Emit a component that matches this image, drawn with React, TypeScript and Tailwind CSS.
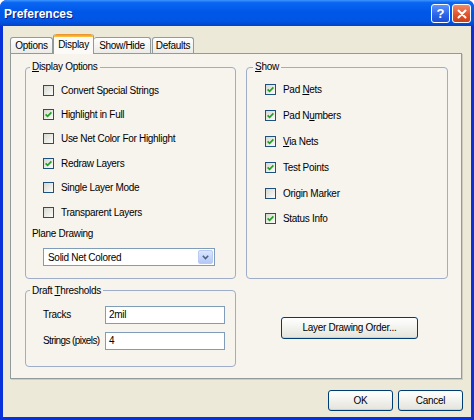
import type { ReactNode } from "react";

const DISPLAY_OPTIONS: { label: ReactNode; checked: boolean }[] = [
  { label: "Convert Special Strings", checked: false },
  { label: "Highlight in Full", checked: true },
  { label: "Use Net Color For Highlight", checked: false },
  { label: "Redraw Layers", checked: true },
  { label: "Single Layer Mode", checked: false },
  { label: "Transparent Layers", checked: false },
];

const SHOW_OPTIONS: { label: ReactNode; checked: boolean }[] = [
  { label: <>Pad <u>N</u>ets</>, checked: true },
  { label: <>Pad N<u>u</u>mbers</>, checked: true },
  { label: <><u>V</u>ia Nets</>, checked: true },
  { label: "Test Points", checked: true },
  { label: "Origin Marker", checked: false },
  { label: "Status Info", checked: true },
];

function CheckBox({ checked }: { checked: boolean }) {
  return (
    <span className="flex h-[11px] w-[11px] shrink-0 items-center justify-center border border-[#1c5180] bg-[linear-gradient(135deg,#d9d9d2,#fbfbf8)]">
      {checked && (
        <svg width="7" height="7" viewBox="0 0 7 7">
          <path d="M0.6 3.3 L2.6 5.3 L6.4 1.4" stroke="#21a121" strokeWidth="1.7" fill="none" />
        </svg>
      )}
    </span>
  );
}

function XpButton({ children, className }: { children: ReactNode; className: string }) {
  return (
    <button
      className={
        "flex items-center justify-center rounded-[3px] border border-[#003c74] bg-[linear-gradient(180deg,#ffffff_0%,#f3f3ef_45%,#e4e3db_100%)] text-black shadow-[inset_0_-1px_0_#d6d0c5] " +
        className
      }
    >
      {children}
    </button>
  );
}

export default function App() {
  return (
    <div className="h-[420px] w-[474px] bg-white">
      <div
        className="flex h-[420px] w-[474px] flex-col overflow-hidden rounded-t-[7px] bg-[#0831d9] text-[10px] tracking-[-0.3px] text-black"
        style={{ fontFamily: '"Liberation Sans", Arial, sans-serif' }}
      >
        {/* Title bar */}
        <div className="flex h-[26px] shrink-0 items-center bg-[linear-gradient(180deg,#3d95ff_0%,#0a66f2_10%,#0058e8_45%,#0055e5_80%,#0443c9_100%)] pt-px pr-[3px] pl-[4px]">
          <span className="text-[12px] font-bold tracking-normal text-white [text-shadow:1px_1px_0_#0f1f8f]">
            Preferences
          </span>
          <div className="ml-auto flex gap-[2px]">
            <div className="flex h-[19px] w-[19px] items-center justify-center rounded-[3px] border border-white bg-[linear-gradient(180deg,#5b93ff,#2a63e6_60%,#1b50d6)] text-[13px] font-bold tracking-normal text-white">
              ?
            </div>
            <div className="flex h-[19px] w-[19px] items-center justify-center rounded-[3px] border border-white bg-[linear-gradient(180deg,#f08a6a,#e2552c_55%,#c8401c)]">
              <svg width="10" height="10" viewBox="0 0 10 10">
                <path d="M1.5 1.5 L8.5 8.5 M8.5 1.5 L1.5 8.5" stroke="white" strokeWidth="2" strokeLinecap="round" />
              </svg>
            </div>
          </div>
        </div>

        {/* Body */}
        <div className="mx-[3px] mb-[3px] flex flex-1 flex-col bg-[#ece9d8]">
          {/* Tabs */}
          <div className="flex h-[27px] shrink-0 items-end pt-[8px] pl-[7px]">
            <div className="flex h-[16px] w-[43px] items-center justify-center rounded-t-[3px] border border-b-0 border-[#919b9c] bg-[linear-gradient(180deg,#fefefe,#ecebe6)]">
              Options
            </div>
            <div className="relative z-10 -mb-px flex h-[20px] w-[41px] flex-col rounded-t-[3px] border-x border-[#919b9c] bg-[#fbfaf7]">
              <div className="h-[3px] rounded-t-[3px] bg-[linear-gradient(180deg,#e68b2c,#ffc73c)]" />
              <div className="flex flex-1 items-center justify-center pb-[2px]">Display</div>
            </div>
            <div className="flex h-[16px] w-[57px] items-center justify-center rounded-t-[3px] border border-b-0 border-l-0 border-[#919b9c] bg-[linear-gradient(180deg,#fefefe,#ecebe6)]">
              Show/Hide
            </div>
            <div className="ml-px flex h-[16px] w-[42px] items-center justify-center rounded-t-[3px] border border-b-0 border-[#919b9c] bg-[linear-gradient(180deg,#fefefe,#ecebe6)]">
              Defaults
            </div>
          </div>

          {/* Tab page */}
          <div className="ml-[7px] h-[326px] w-[452px] border border-[#919b9c] bg-[#f7f3ed] pt-[7px] pl-[14px] shadow-[1px_1px_0_#d0cdc0]">
            <div className="grid grid-cols-[211px_202px] gap-x-[10px]">
              {/* Display Options */}
              <fieldset className="rounded-[4px] border border-[#9eadc9] pt-[5px] pr-[6px] pb-[11.6px] pl-[6px]">
                <legend className="ml-[-2px] px-[2px] leading-[12px]">
                  <u>D</u>isplay Options
                </legend>
                {DISPLAY_OPTIONS.map((o, i) => (
                  <div key={i} className="flex h-[24.4px] items-center gap-[7px] pl-[11px]">
                    <CheckBox checked={o.checked} />
                    <span>{o.label}</span>
                  </div>
                ))}
                <div className="mt-[4px] leading-[12px]">Plane Drawing</div>
                <div className="mt-[8px] ml-[11px] flex h-[18px] w-[172px] items-center border border-[#7f9db9] bg-white">
                  <span className="flex-1 pl-[4px]">Solid Net Colored</span>
                  <div className="mr-px flex h-[14px] w-[15px] items-center justify-center rounded-[2px] border border-[#b9cbf3] bg-[linear-gradient(180deg,#dbe6fe,#b4c8f7)]">
                    <svg width="7" height="5" viewBox="0 0 7 5">
                      <path d="M0.8 0.8 L3.5 3.5 L6.2 0.8" stroke="#4d6185" strokeWidth="1.6" fill="none" />
                    </svg>
                  </div>
                </div>
              </fieldset>

              {/* Show */}
              <fieldset className="rounded-[4px] border border-[#9eadc9] pt-[4px] pl-[18px]">
                <legend className="ml-[-12px] px-[2px] leading-[12px]">
                  <u>S</u>how
                </legend>
                {SHOW_OPTIONS.map((o, i) => (
                  <div key={i} className="flex h-[25.8px] items-center gap-[7px]">
                    <CheckBox checked={o.checked} />
                    <span>{o.label}</span>
                  </div>
                ))}
              </fieldset>

              {/* Draft Thresholds */}
              <fieldset className="mt-[6px] rounded-[4px] border border-[#9eadc9] pt-[9px] pb-[16px] pl-[17px]">
                <legend className="ml-[-13px] px-[2px] leading-[12px]">
                  Draft <u>T</u>hresholds
                </legend>
                <div className="flex items-center">
                  <span className="w-[62px] whitespace-nowrap">Tracks</span>
                  <div className="flex h-[18px] w-[120px] items-center border border-[#7f9db9] bg-white pl-[3px]">
                    2mil
                  </div>
                </div>
                <div className="mt-[8px] flex items-center">
                  <span className="w-[62px] whitespace-nowrap tracking-[-0.6px]">Strings (pixels)</span>
                  <div className="flex h-[18px] w-[120px] items-center border border-[#7f9db9] bg-white pl-[3px]">
                    4
                  </div>
                </div>
              </fieldset>

              <div className="pt-[38px] pl-[35px]">
                <XpButton className="h-[22px] w-[137px]">Layer Drawing Order...</XpButton>
              </div>
            </div>
          </div>

          {/* Dialog buttons */}
          <div className="mt-[11px] flex justify-end gap-[5px] pr-[8px]">
            <XpButton className="h-[21px] w-[65px]">OK</XpButton>
            <XpButton className="h-[21px] w-[65px]">Cancel</XpButton>
          </div>
        </div>
      </div>
    </div>
  );
}
